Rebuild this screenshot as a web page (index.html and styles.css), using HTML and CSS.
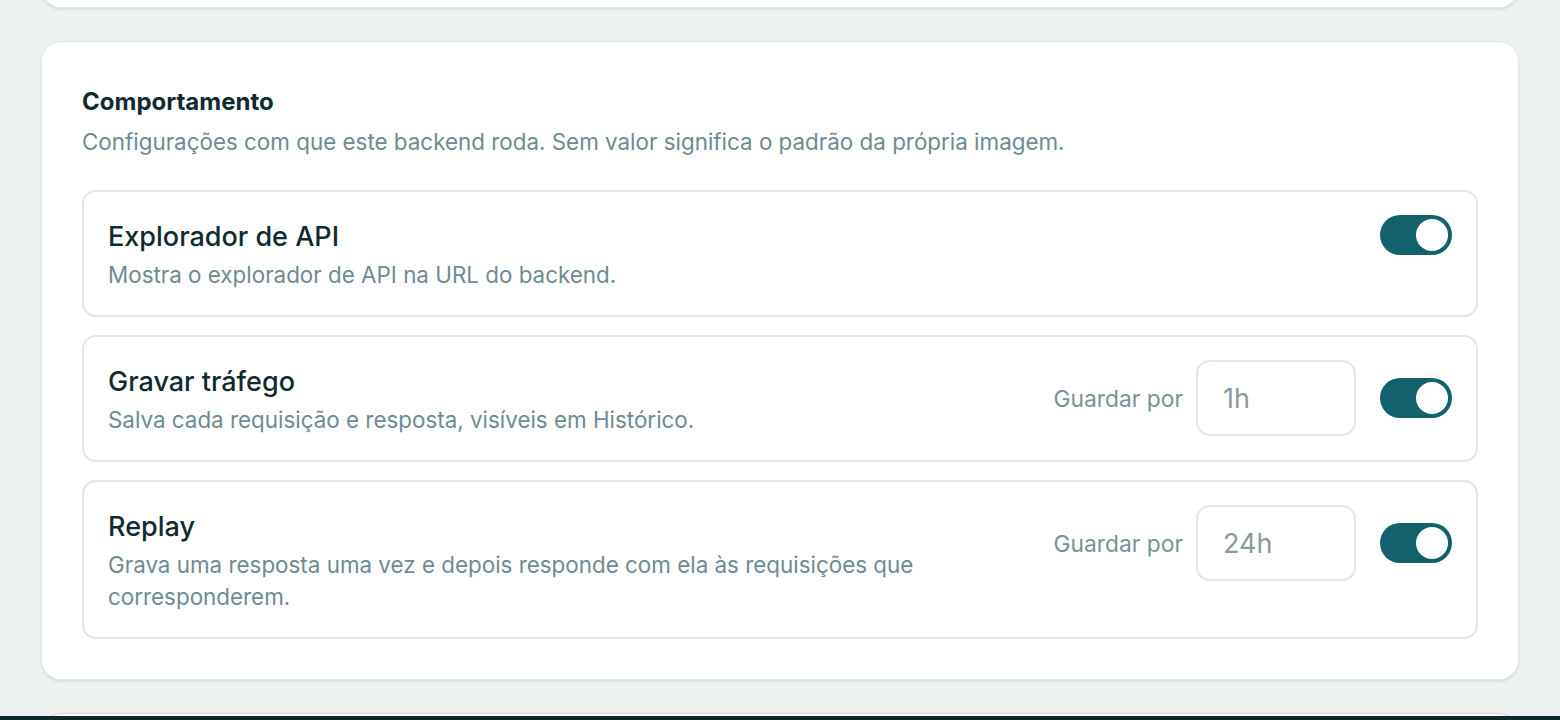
FILE: index.html
```html
<!DOCTYPE html>
<html lang="pt-BR">
<head>
<meta charset="utf-8">
<title>Comportamento</title>
<link rel="stylesheet" href="styles.css">
</head>
<body>
<main class="page">
  <section class="card card-prev"></section>

  <section class="card card-main">
    <h2 class="section-title">Comportamento</h2>
    <p class="section-desc">Configurações com que este backend roda. Sem valor significa o padrão da própria imagem.</p>

    <div class="rows">
      <div class="row">
        <div class="row-text">
          <div class="row-title">Explorador de API</div>
          <div class="row-desc">Mostra o explorador de API na URL do backend.</div>
        </div>
        <div class="row-controls">
          <span class="toggle on"><span class="knob"></span></span>
        </div>
      </div>

      <div class="row">
        <div class="row-text">
          <div class="row-title">Gravar tráfego</div>
          <div class="row-desc">Salva cada requisição e resposta, visíveis em Histórico.</div>
        </div>
        <div class="row-controls">
          <span class="keep-label">Guardar por</span>
          <input class="keep-input" type="text" value="1h">
          <span class="toggle on"><span class="knob"></span></span>
        </div>
      </div>

      <div class="row">
        <div class="row-text">
          <div class="row-title">Replay</div>
          <div class="row-desc">Grava uma resposta uma vez e depois responde com ela às requisições que corresponderem.</div>
        </div>
        <div class="row-controls">
          <span class="keep-label">Guardar por</span>
          <input class="keep-input" type="text" value="24h">
          <span class="toggle on"><span class="knob"></span></span>
        </div>
      </div>
    </div>
  </section>

  <section class="card card-danger"></section>
</main>
<div class="bottom-bar"></div>
</body>
</html>
```

FILE: styles.css
```css
* { box-sizing: border-box; }

html, body {
  margin: 0;
  padding: 0;
  background: #edf1f0;
  font-family: Inter, "Noto Sans", sans-serif;
  color: #0f2b31;
  height: 720px;
  overflow: hidden;
}

.page {
  display: flex;
  flex-direction: column;
  gap: 33px;
  padding: 0 41px;
  margin-top: -40px;
}

.card {
  background: #ffffff;
  border: 1px solid #dfe5e3;
  border-radius: 20px;
  box-shadow: 0 2px 2px rgba(20, 50, 55, 0.08);
}

.card-prev {
  height: 48px;
  flex: none;
}

.card-main {
  padding: 40px 40px 40px 40px;
}

.card-danger {
  height: 60px;
  border-color: #f6c6c4;
  flex: none;
}

.section-title {
  margin: 0;
  font-size: 24px;
  line-height: 40px;
  font-weight: 700;
  color: #0f2b31;
}

.section-desc {
  margin: 4px 0 0;
  font-size: 22.4px;
  line-height: 32px;
  color: #6f8b92;
}

.rows {
  margin-top: 32px;
  display: flex;
  flex-direction: column;
  gap: 18px;
}

.row {
  display: flex;
  align-items: flex-start;
  justify-content: space-between;
  gap: 24px;
  border: 2px solid #e1e7e5;
  border-radius: 14px;
  padding: 23px 24px 24px;
}

.row-text {
  flex: 1;
  min-width: 0;
}

.row-title {
  font-size: 27px;
  line-height: 44px;
  font-weight: 500;
  color: #0f2b31;
}

.row-desc {
  font-size: 22.4px;
  line-height: 32px;
  color: #6f8b92;
}

.row-controls {
  display: flex;
  align-items: center;
  flex: none;
}

.keep-label {
  font-size: 22.8px;
  color: #7b9197;
  margin-right: 13px;
}

.keep-input {
  width: 160px;
  height: 76px;
  border: 2px solid #e1e7e5;
  border-radius: 14px;
  padding: 0 0 0 25px;
  font-family: inherit;
  font-size: 27px;
  color: #8a9a9e;
  background: #fff;
  outline: none;
  margin-right: 24px;
}

.toggle {
  position: relative;
  display: inline-block;
  width: 72px;
  height: 40px;
  border-radius: 20px;
  background: #13616a;
}

.toggle .knob {
  position: absolute;
  top: 4px;
  right: 4px;
  width: 32px;
  height: 32px;
  border-radius: 50%;
  background: #ffffff;
}

.bottom-bar {
  position: fixed;
  left: 0;
  right: 0;
  bottom: 0;
  height: 4px;
  background: #0f262b;
}
```
